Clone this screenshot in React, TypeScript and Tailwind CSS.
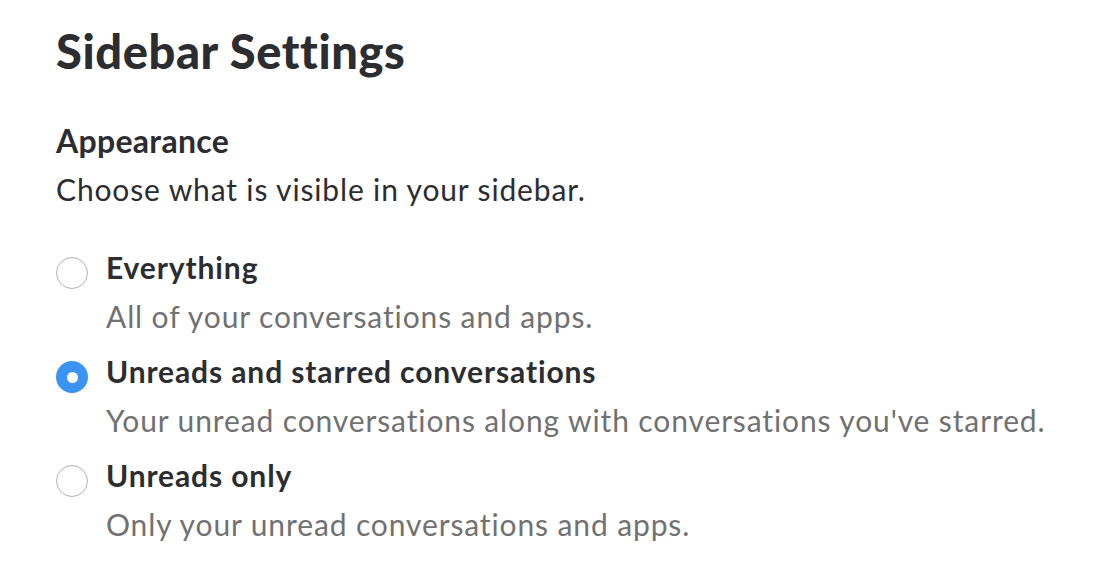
import React from 'react';

interface Option {
  label: string;
  description: string;
  checked: boolean;
}

const options: Option[] = [
  { label: 'Everything', description: 'All of your conversations and apps.', checked: false },
  {
    label: 'Unreads and starred conversations',
    description: "Your unread conversations along with conversations you've starred.",
    checked: true,
  },
  { label: 'Unreads only', description: 'Only your unread conversations and apps.', checked: false },
];

const Radio: React.FC<{ checked: boolean }> = ({ checked }) =>
  checked ? (
    <span className="flex w-[32px] h-[32px] rounded-full bg-[#3b94f4] items-center justify-center shrink-0">
      <span className="w-[11px] h-[11px] rounded-full bg-white" />
    </span>
  ) : (
    <span className="block w-[32px] h-[32px] rounded-full border border-[#b5b5b5] bg-white shadow-[inset_0_1px_1px_rgba(0,0,0,0.06)] shrink-0" />
  );

export default function App() {
  return (
    <div
      className="w-[1100px] h-[586px] bg-white pl-[56px] pt-[19px] text-[#2c2d30] overflow-hidden"
      style={{ fontFamily: 'Lato, "Noto Sans", sans-serif' }}
    >
      <h1 className="text-[47px] leading-[64px] font-black tracking-[0.6px]">Sidebar Settings</h1>
      <h2 className="mt-[38px] text-[32px] leading-[40px] font-bold tracking-[0.3px]">Appearance</h2>
      <p className="mt-[4px] text-[30px] leading-[48px] tracking-[0.85px]">
        Choose what is visible in your sidebar.
      </p>
      <div className="mt-[30px] flex flex-col gap-[6px]">
        {options.map((opt, i) => (
          <div key={i} className="flex items-start gap-[18px]">
            <div className="pt-[14px]">
              <Radio checked={opt.checked} />
            </div>
            <div className="tracking-[0.88px] whitespace-nowrap">
              <div className="text-[30px] leading-[48px] font-bold">{opt.label}</div>
              <div className="text-[30px] leading-[50px] text-[#717171]">{opt.description}</div>
            </div>
          </div>
        ))}
      </div>
    </div>
  );
}
